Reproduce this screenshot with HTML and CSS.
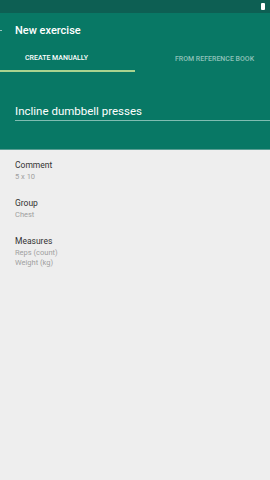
FILE: index.html
```html
<!DOCTYPE html>
<html lang="en">
<head>
    <meta charset="UTF-8">
    <meta name="viewport" content="width=device-width, initial-scale=1.0">
    <title>New exercise</title>
    <link rel="stylesheet" href="styles.css">
</head>
<body>
    <div class="header">
        <div class="status-bar">
            <span class="battery"></span>
        </div>
        <div class="toolbar">
            <span class="back"></span>
            <h1 class="title">New exercise</h1>
        </div>
        <div class="tabs">
            <div class="tab active">CREATE MANUALLY</div>
            <div class="tab second">FROM REFERENCE BOOK</div>
        </div>
        <div class="name-field">
            <input type="text" class="name-input" value="Incline dumbbell presses">
        </div>
    </div>

    <div class="details">
        <div class="detail">
            <p class="label">Comment</p>
            <p class="value">5 x 10</p>
        </div>
        <div class="detail">
            <p class="label">Group</p>
            <p class="value">Chest</p>
        </div>
        <div class="detail">
            <p class="label">Measures</p>
            <p class="value">Reps (count)</p>
            <p class="value">Weight (kg)</p>
        </div>
    </div>
</body>
</html>
```

FILE: styles.css
```css
* {
    margin: 0;
    padding: 0;
    box-sizing: border-box;
}

body {
    width: 270px;
    height: 480px;
    background-color: #eeeeee;
    font-family: Roboto, "Liberation Sans", sans-serif;
    overflow: hidden;
}

.header {
    background-color: #087865;
    height: 150px;
    border-bottom: 1px solid #5a9e93;
}

.status-bar {
    height: 13px;
    background-color: #0d5f53;
    display: flex;
    justify-content: flex-end;
    align-items: center;
    padding-right: 5px;
}

.battery {
    width: 4px;
    height: 7px;
    background-color: #ffffff;
    border-radius: 1px;
}

.toolbar {
    height: 35px;
    display: flex;
    align-items: center;
    position: relative;
}

.back {
    position: absolute;
    left: -2px;
    top: 17px;
    width: 4px;
    height: 1px;
    background-color: #9cc6bf;
}

.title {
    margin-left: 15px;
    font-size: 11px;
    font-weight: 500;
    color: #ffffff;
}

.tabs {
    display: flex;
    height: 24px;
}

.tab {
    width: 135px;
    display: flex;
    justify-content: center;
    align-items: center;
    font-size: 7px;
    font-weight: 500;
    color: #8fc2b9;
    padding-bottom: 3px;
}

.tab.active {
    color: #ffffff;
    border-bottom: 2px solid #a9d48f;
    padding-right: 22px;
}

.tab.second {
    padding-left: 24px;
}

.name-field {
    padding: 28px 0 0 15px;
}

.name-input {
    width: 100%;
    background: none;
    border: none;
    border-bottom: 1px solid #7fbdb2;
    color: #ffffff;
    font-family: Roboto, "Liberation Sans", sans-serif;
    font-size: 11.5px;
    padding-bottom: 2px;
    outline: none;
}

.details {
    padding: 9px 15px;
}

.detail {
    margin-bottom: 15px;
}

.label {
    font-size: 8.5px;
    color: #333333;
    line-height: 13px;
}

.value {
    font-size: 7.5px;
    color: #a0a0a0;
    line-height: 10px;
}
```
